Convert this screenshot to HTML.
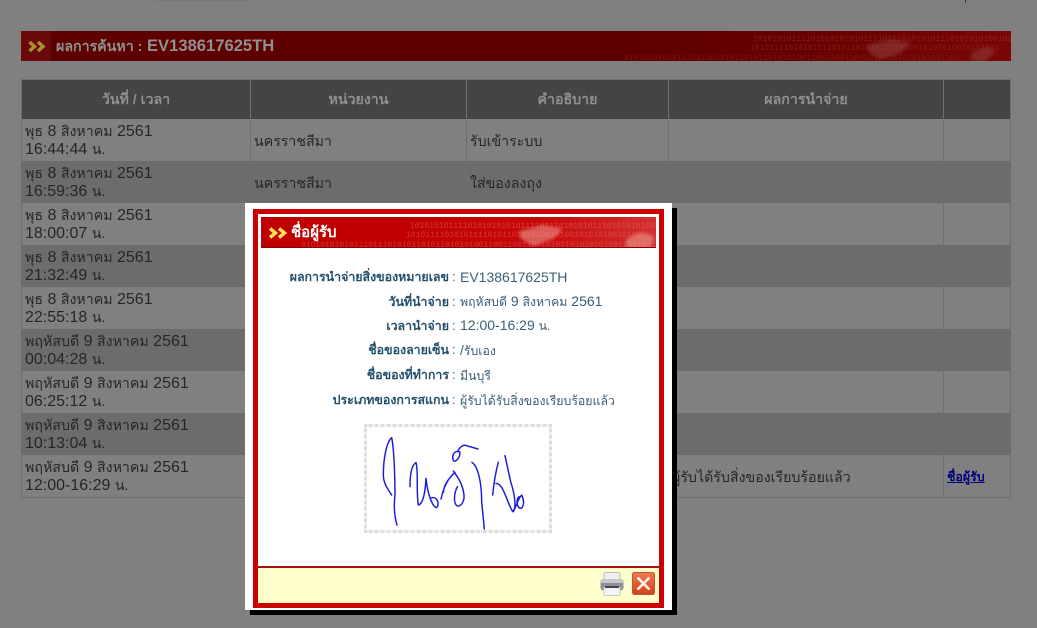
<!DOCTYPE html>
<html lang="th"><head><meta charset="utf-8"><title>ผลการค้นหา</title>
<style>
html,body{margin:0;padding:0;background:#808080;width:1037px;height:628px;overflow:hidden}
body{position:relative;font-family:"Liberation Sans",Tahoma,sans-serif;color:#262626}
.abs{position:absolute}
.banner{left:21px;top:31px;width:990px;height:30px;background:linear-gradient(90deg,#5f0000 0,#5f0000 62%,#650000 78%,#7a0606 100%);overflow:hidden}
.title{left:56px;top:37px;font-size:16.6px;line-height:18px;color:#8f8f8f;font-weight:bold;white-space:nowrap}
.title span{font-size:14.2px}
table{position:absolute;left:21px;top:79px;width:990px;border-collapse:separate;border-spacing:0;table-layout:fixed;border-top:1px solid #6e6e6e;border-bottom:1px solid #6e6e6e;border-right:1px solid #6e6e6e}
th{height:39px;padding:0;background:#444;color:#8f8f8f;font-size:14.2px;font-weight:bold;border-left:1px solid #6e6e6e;text-align:center}
td{height:42px;padding:2px 3px 0;box-sizing:border-box;font-size:16px;line-height:18px;border-left:1px solid #6e6e6e;vertical-align:middle;white-space:nowrap;overflow:hidden}
td .t{font-size:14.2px}
tr.a td{background:#808080}
tr.b td{background:#6c6c6c}
td.d{padding-top:3px;font-size:14.2px}
a{color:#00007a;font-size:12.4px;font-weight:bold;text-decoration:underline}
.white{left:245px;top:203px;width:427px;height:407px;background:#fff;box-shadow:5px 5px 0 #000}
.frame{left:253px;top:209px;width:401px;height:389px;border:5px solid #cc0000;background:#fff}
.mbanner{left:261px;top:217px;width:395px;height:31px;background:linear-gradient(90deg,#c00000 0,#c00000 35%,#c60808 70%,#d23030 100%);border-bottom:1px solid #8a0000;box-sizing:border-box;overflow:hidden}
.mtitle{left:291px;top:223px;font-size:15px;line-height:20px;font-weight:bold;color:#fff;white-space:nowrap}
.lab{left:262px;width:187px;text-align:right;font-size:12.4px;line-height:18px;font-weight:bold;color:#234f6e;white-space:nowrap}
.colon{left:452px;font-size:13px;line-height:18px;color:#3a5f78}
.val{left:460px;font-size:14px;line-height:18px;color:#3a5f78;white-space:nowrap}
.val .s{font-size:12.3px}
.yellow{left:258px;top:566px;width:401px;height:37px;background:#ffffcc;border-top:2px solid #aa1010;box-sizing:border-box}
svg{position:absolute;display:block}
.bin{font-family:"Liberation Mono",monospace;font-size:8px}
</style></head><body>

<div class="abs" style="left:965px;top:0;width:1px;height:3px;background:#333"></div>
<div class="abs" style="left:155px;top:0;width:95px;height:1px;background:#777"></div>

<div class="abs banner">
<svg width="990" height="30" style="left:0;top:0">
<defs><filter id="b1"><feGaussianBlur stdDeviation=".35"/></filter><filter id="b2"><feGaussianBlur stdDeviation="1.5"/></filter></defs>
<rect x="0" y="0" width="30" height="30" fill="#6a0a0a"/>
<g filter="url(#b1)">
<text class="bin" x="732" y="10" fill="#a84040" opacity=".45">1010101011110101010101011110111010101011101010101001010</text>
<text class="bin" x="729" y="19" fill="#a84040" opacity=".4">1010111101010111101011010101011010010101010010101001</text>
<text class="bin" x="603" y="29" fill="#903030" opacity=".45">0101010101011101110101011010110101010011001100110010100101010101001101</text>
</g>
<path d="M846 14 L870 8 L890 12 L880 22 L860 28 L848 22Z M950 22 L965 16 L975 20 L965 30 L950 30Z" fill="#a06060" opacity=".35" filter="url(#b2)"/>
<path d="M8.5 11 L13.5 15.5 L8.5 20 M17 11 L22 15.5 L17 20" fill="none" stroke="#a89030" stroke-width="3.4"/>
</svg>
</div>
<div class="abs title"><span>ผลการค้นหา :</span> EV138617625TH</div>

<table>
<colgroup><col style="width:229px"><col style="width:216px"><col style="width:202px"><col style="width:275px"><col style="width:67px"></colgroup>
<tr><th>วันที่ / เวลา</th><th>หน่วยงาน</th><th>คำอธิบาย</th><th>ผลการนำจ่าย</th><th></th></tr>
<tr class="a"><td><span class="t">พุธ</span> 8 <span class="t">สิงหาคม</span> 2561<br>16:44:44 <span class="t">น.</span></td><td class="d">นครราชสีมา</td><td class="d">รับเข้าระบบ</td><td></td><td></td></tr>
<tr class="b"><td><span class="t">พุธ</span> 8 <span class="t">สิงหาคม</span> 2561<br>16:59:36 <span class="t">น.</span></td><td class="d">นครราชสีมา</td><td class="d">ใส่ของลงถุง</td><td></td><td></td></tr>
<tr class="a"><td><span class="t">พุธ</span> 8 <span class="t">สิงหาคม</span> 2561<br>18:00:07 <span class="t">น.</span></td><td></td><td></td><td></td><td></td></tr>
<tr class="b"><td><span class="t">พุธ</span> 8 <span class="t">สิงหาคม</span> 2561<br>21:32:49 <span class="t">น.</span></td><td></td><td></td><td></td><td></td></tr>
<tr class="a"><td><span class="t">พุธ</span> 8 <span class="t">สิงหาคม</span> 2561<br>22:55:18 <span class="t">น.</span></td><td></td><td></td><td></td><td></td></tr>
<tr class="b"><td><span class="t">พฤหัสบดี</span> 9 <span class="t">สิงหาคม</span> 2561<br>00:04:28 <span class="t">น.</span></td><td></td><td></td><td></td><td></td></tr>
<tr class="a"><td><span class="t">พฤหัสบดี</span> 9 <span class="t">สิงหาคม</span> 2561<br>06:25:12 <span class="t">น.</span></td><td></td><td></td><td></td><td></td></tr>
<tr class="b"><td><span class="t">พฤหัสบดี</span> 9 <span class="t">สิงหาคม</span> 2561<br>10:13:04 <span class="t">น.</span></td><td></td><td></td><td></td><td></td></tr>
<tr class="a"><td><span class="t">พฤหัสบดี</span> 9 <span class="t">สิงหาคม</span> 2561<br>12:00-16:29 <span class="t">น.</span></td><td></td><td></td><td class="d">ผู้รับได้รับสิ่งของเรียบร้อยแล้ว</td><td><a href="#">ชื่อผู้รับ</a></td></tr>
</table>

<div class="abs white"></div>
<div class="abs frame"></div>
<div class="abs mbanner">
<svg width="395" height="31" style="left:0;top:0">
<defs><filter id="b3"><feGaussianBlur stdDeviation=".35"/></filter><filter id="b4"><feGaussianBlur stdDeviation="1.5"/></filter></defs>
<g filter="url(#b3)">
<text class="bin" x="149" y="11" fill="#e87070" opacity=".5">1010101011110101010101011110111010101011101010101001</text>
<text class="bin" x="145" y="20" fill="#e87070" opacity=".45">101011110101011110101101010101101001010101001010</text>
<text class="bin" x="40" y="30" fill="#e06060" opacity=".55">0101010101011101110101011010110101010011001100110010100101010101001101111101</text>
</g>
<path d="M258 14 L282 8 L302 12 L292 22 L272 29 L260 22Z M365 22 L380 15 L393 19 L390 31 L365 31Z" fill="#f0b0a0" opacity=".5" filter="url(#b4)"/>
<path d="M9 11.5L14.5 16L9 20.5 M18 11.5L23.5 16L18 20.5" fill="none" stroke="#ffdf50" stroke-width="3.4"/>
</svg>
</div>
<div class="abs mtitle">ชื่อผู้รับ</div>

<div class="abs lab" style="top:268px">ผลการนำจ่ายสิ่งของหมายเลข</div><div class="abs colon" style="top:268px">:</div><div class="abs val" style="top:268px">EV138617625TH</div>
<div class="abs lab" style="top:293px">วันที่นำจ่าย</div><div class="abs colon" style="top:293px">:</div><div class="abs val" style="top:292px"><span class="s">พฤหัสบดี</span> 9 <span class="s">สิงหาคม</span> 2561</div>
<div class="abs lab" style="top:317px">เวลานำจ่าย</div><div class="abs colon" style="top:317px">:</div><div class="abs val" style="top:316px">12:00-16:29 <span class="s">น.</span></div>
<div class="abs lab" style="top:341px">ชื่อของลายเซ็น</div><div class="abs colon" style="top:341px">:</div><div class="abs val" style="top:341px">/<span class="s">รับเอง</span></div>
<div class="abs lab" style="top:366px">ชื่อของที่ทำการ</div><div class="abs colon" style="top:366px">:</div><div class="abs val" style="top:366px"><span class="s">มีนบุรี</span></div>
<div class="abs lab" style="top:391px">ประเภทของการสแกน</div><div class="abs colon" style="top:391px">:</div><div class="abs val" style="top:391px"><span class="s">ผู้รับได้รับสิ่งของเรียบร้อยแล้ว</span></div>

<div class="abs" style="left:364px;top:424px;width:182px;height:103px;border:3px dotted #dcdcdc;background:#f0f0f0"></div>
<div class="abs" style="left:367px;top:427px;width:182px;height:103px;background:#fff"></div>
<svg width="340" height="213" viewBox="0 0 1020 639" style="left:340px;top:415px" fill="none" stroke="#1c1cd8" stroke-width="4.4" stroke-linecap="round" stroke-linejoin="round">
<path d="M155 240C145 225 130 205 130 180C130 130 140 80 155 68C162 100 165 180 165 240C160 280 165 310 171 330"/>
<path d="M210 215C210 180 215 150 228 143C236 170 228 230 235 270C248 268 256 235 258 190C262 230 275 275 290 278C300 268 292 240 270 250"/>
<path d="M303 252C312 212 325 190 345 172C332 185 312 205 310 232M340 168C352 185 368 205 372 240C374 262 360 278 350 272C340 262 342 235 352 215"/>
<path d="M340 137C333 115 350 103 360 112C360 128 347 143 340 137ZM352 110C360 95 370 88 380 92L414 102"/>
<path d="M396 142C416 155 425 210 425 260L433 342"/>
<path d="M458 240C462 200 470 160 475 142M468 205C490 205 500 260 518 290C530 280 525 240 512 200L495 122M520 290C530 270 535 250 545 240C555 260 550 282 540 280C530 275 528 255 537 245"/>
</svg>

<div class="abs yellow"></div>

<svg width="24" height="24" viewBox="0 0 24 24" style="left:600px;top:572px">
<rect x="4" y="0.5" width="16" height="9" rx="1.5" fill="#eef0f0" stroke="#bcbcbc"/>
<rect x="0.5" y="7" width="23" height="11.5" rx="3" fill="#8d9296"/>
<rect x="0.5" y="7" width="23" height="4" rx="2" fill="#c4c8ca"/>
<rect x="4" y="15" width="16" height="8.5" rx="1" fill="#f6f6f6" stroke="#c8c8c8"/>
<rect x="5" y="14" width="14" height="2" fill="#444"/>
</svg>
<svg width="23" height="23" viewBox="0 0 23 23" style="left:632px;top:572px">
<defs><linearGradient id="g" x1="0" y1="0" x2="0" y2="1"><stop offset="0" stop-color="#ee7a4e"/><stop offset="1" stop-color="#d2401c"/></linearGradient></defs>
<rect x=".5" y=".5" width="22" height="22" rx="2" fill="url(#g)" stroke="#c9512e"/>
<path d="M5.5 5.5L17.5 17.5M17.5 5.5L5.5 17.5" stroke="#fff3ea" stroke-width="2.6"/>
</svg>
</body></html>
